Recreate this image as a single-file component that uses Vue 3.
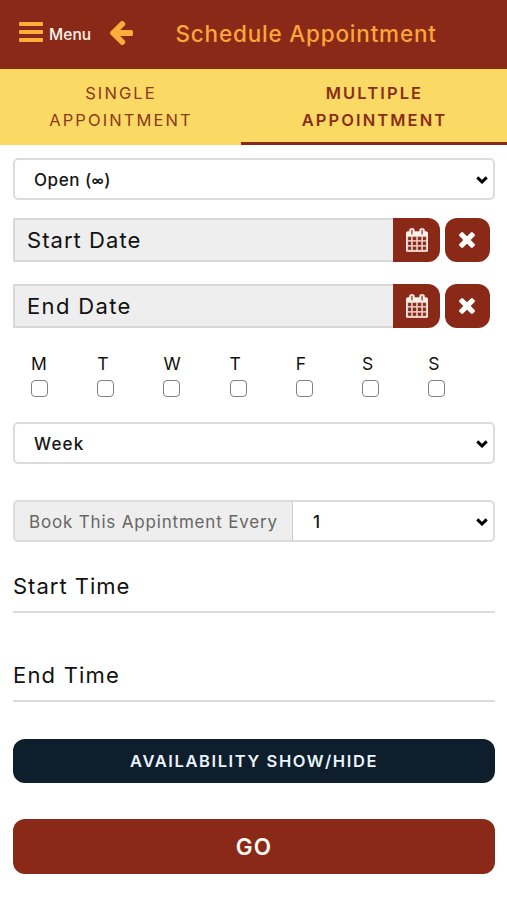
<script setup>
import { ref } from 'vue'

const days = ref(['M', 'T', 'W', 'T', 'F', 'S', 'S'].map((label) => ({ label, checked: false })))
const dates = [
  { label: 'Start Date', cls: 'start-date' },
  { label: 'End Date', cls: 'end-date' },
]
</script>

<template>
  <div class="page">
    <header class="header">
      <button class="menu">
        <svg class="bars" width="24" height="20" viewBox="0 0 24 20">
          <rect width="24" height="4" rx="1" /><rect y="8" width="24" height="4" rx="1" /><rect y="16" width="24" height="4" rx="1" />
        </svg>
        <span class="menu-label">Menu</span>
      </button>
      <svg class="back" width="23" height="24" viewBox="192 200 1472 1520">
        <path d="M1664 896v128q0 53-32.5 90.5t-84.5 37.5h-704l293 294q38 36 38 90t-38 90l-75 76q-37 37-90 37-52 0-91-37l-651-652q-37-37-37-90 0-52 37-91l651-650q38-38 91-38 52 0 90 38l75 74q38 38 38 91t-38 91l-293 293h704q52 0 84.5 37.5t32.5 90.5z" />
      </svg>
      <h1 class="title"><span>Schedule Appointment</span></h1>
    </header>

    <nav class="tabs">
      <div class="tab"><span>SINGLE</span><span>APPOINTMENT</span></div>
      <div class="tab active"><span>MULTIPLE</span><span>APPOINTMENT</span></div>
    </nav>

    <main class="form">
      <div class="select">
        <span class="open-text">Open (<span class="infinity">∞</span>)</span>
        <svg class="chevron" width="12" height="8" viewBox="0 0 12 8"><path d="M1.3 1.4L6 6L10.7 1.4" /></svg>
      </div>

      <div v-for="d in dates" :key="d.label" class="date-row">
        <div class="date-input"><span :class="d.cls">{{ d.label }}</span></div>
        <button class="icon-btn calendar">
          <svg width="22" height="24" viewBox="64 0 1664 1792">
            <path d="M192 1664h288v-288h-288v288zm352 0h320v-288h-320v288zm-352-352h288v-320h-288v320zm352 0h320v-320h-320v320zm-352-384h288v-288h-288v288zm736 736h320v-288h-320v288zm-384-736h320v-288h-320v288zm768 736h288v-288h-288v288zm-384-352h320v-320h-320v320zm-352-864v-288q0-13-9.5-22.5t-22.5-9.5h-64q-13 0-22.5 9.5t-9.5 22.5v288q0 13 9.5 22.5t22.5 9.5h64q13 0 22.5-9.5t9.5-22.5zm736 864h288v-320h-288v320zm-384-384h320v-288h-320v288zm384 0h288v-288h-288v288zm32-480v-288q0-13-9.5-22.5t-22.5-9.5h-64q-13 0-22.5 9.5t-9.5 22.5v288q0 13 9.5 22.5t22.5 9.5h64q13 0 22.5-9.5t9.5-22.5zm384-64v1280q0 52-38 90t-90 38h-1408q-52 0-90-38t-38-90v-1280q0-52 38-90t90-38h128v-96q0-66 47-113t113-47h64q66 0 113 47t47 113v96h384v-96q0-66 47-113t113-47h64q66 0 113 47t47 113v96h128q52 0 90 38t38 90z" />
          </svg>
        </button>
        <button class="icon-btn clear">
          <svg width="16" height="16" viewBox="302 366 1188 1188">
            <path d="M1490 1322q0 40-28 68l-136 136q-28 28-68 28t-68-28l-294-294-294 294q-28 28-68 28t-68-28l-136-136q-28-28-28-68t28-68l294-294-294-294q-28-28-28-68t28-68l136-136q28-28 68-28t68 28l294 294 294-294q28-28 68-28t68 28l136 136q28 28 28 68t-28 68l-294 294 294 294q28 28 28 68z" />
          </svg>
        </button>
      </div>

      <div class="days">
        <label v-for="(day, i) in days" :key="i" class="day">
          <span>{{ day.label }}</span>
          <input v-model="day.checked" type="checkbox">
        </label>
      </div>

      <div class="select week">
        <span class="week-text">Week</span>
        <svg class="chevron" width="12" height="8" viewBox="0 0 12 8"><path d="M1.3 1.4L6 6L10.7 1.4" /></svg>
      </div>

      <div class="group">
        <div class="addon"><span>Book This Appintment Every</span></div>
        <div class="select every">
          <span>1</span>
          <svg class="chevron" width="12" height="8" viewBox="0 0 12 8"><path d="M1.3 1.4L6 6L10.7 1.4" /></svg>
        </div>
      </div>

      <div class="time"><span class="start-time">Start Time</span></div>
      <div class="time end"><span class="end-time">End Time</span></div>

      <button class="availability"><span>AVAILABILITY SHOW/HIDE</span></button>
      <button class="go"><span>GO</span></button>
    </main>
  </div>
</template>

<style>
body { margin: 0; background: #fff; }
</style>

<style scoped>
* { box-sizing: border-box; }
.page { width: 507px; height: 900px; overflow: hidden; background: #fff; color: #161616; font-family: Inter, "Open Sans", sans-serif; white-space: nowrap; }
button { border: 0; padding: 0; font-family: inherit; color: inherit; background: none; }

.header { display: flex; height: 69px; padding-left: 19px; background: #8a2917; }
.menu { display: flex; align-items: flex-start; width: 91px; padding-top: 22px; }
.bars { fill: #fcad3b; flex: none; }
.menu-label { margin: 3px 0 0 6px; font-size: 15.5px; line-height: 20px; font-weight: 500; color: #fff2ed; letter-spacing: 0.1px; }
.back { margin: 21px 0 0; flex: none; fill: #fcad3b; }
.title { margin: 0 0 0 42.5px; font-size: 22.5px; line-height: 67px; font-weight: 500; color: #fca639; letter-spacing: 0.8px; }

.tabs { display: grid; grid-template-columns: 241px 1fr; height: 76px; background: #fada65; }
.tab { display: flex; flex-direction: column; align-items: center; padding-top: 10.5px; font-size: 16.5px; line-height: 27px; color: #8f371c; letter-spacing: 2.1px; }
.tab span { padding-left: 1px; }
.tab.active { font-weight: 600; border-bottom: 3px solid #8a2917; color: #8a2d18; }

.form { padding: 13px 12px 0 13px; }
.select { display: flex; align-items: center; justify-content: space-between; height: 42px; padding: 1px 5px 0 19px; border: 2px solid #dcdcdc; border-radius: 5px; font-size: 17px; font-weight: 500; background: #fff; }
.open-text { letter-spacing: 0.55px; }
.week-text { letter-spacing: 1.2px; }
.infinity { font-size: 12px; font-weight: 700; position: relative; top: -1px; }
.chevron { fill: none; stroke: #000; stroke-width: 3; flex: none; }

.date-row { display: flex; height: 44px; margin-top: 18px; }
.date-row + .date-row { margin-top: 22px; }
.date-input { width: 380px; border: 2px solid #d8d8d8; border-right: 0; background: #eee; padding-left: 12px; font-size: 22px; line-height: 40px; color: #111; }
.start-date { letter-spacing: 1.05px; }
.end-date { letter-spacing: 1.35px; }
.icon-btn { display: flex; align-items: center; justify-content: center; background: #8a2917; }
.calendar { width: 47px; border-radius: 0 12px 12px 0; padding-left: 1px; }
.calendar path { fill: #fff0e9; stroke: #fff0e9; stroke-width: 34; }
.clear { width: 45px; margin-left: 5px; border-radius: 12px; padding-right: 1px; }
.clear path { fill: #fff; }

.days { display: flex; margin: 23px 0 0 18px; }
.day { display: flex; flex-direction: column; width: 66.2px; font-size: 17.5px; line-height: 25px; color: #111; }
.day input { appearance: none; width: 17px; height: 17px; margin: 4px 0 0; border: 1.5px solid #818181; border-radius: 4px; background: #fff; }
.week { margin-top: 25px; }

.group { display: flex; height: 42px; margin-top: 36px; }
.addon { width: 280px; border: 2px solid #dcdcdc; border-right: 1px solid #ccc; border-radius: 5px 0 0 5px; padding: 1px 0 0 14px; background: #eee; color: #666; font-size: 17px; line-height: 38px; letter-spacing: 0.82px; }
.every { flex: 1; padding-left: 20px; border-left: 0; border-radius: 0 5px 5px 0; }
.time { height: 71px; border-bottom: 2px solid #dcdcdc; padding-top: 29px; font-size: 22px; line-height: 30px; color: #111; }
.time.end { height: 89px; padding-top: 47px; }
.start-time { letter-spacing: 1px; }
.end-time { letter-spacing: 1.2px; }

.availability, .go { display: block; width: 100%; border-radius: 12px; }
.availability { height: 44px; margin-top: 37px; background: #0f1e2d; color: #e9f4fc; font-size: 16.5px; font-weight: 600; letter-spacing: 1.6px; }
.go { height: 55px; margin-top: 36px; background: #8a2917; color: #fff8f3; font-size: 22.5px; font-weight: 600; letter-spacing: 1.2px; }
</style>
